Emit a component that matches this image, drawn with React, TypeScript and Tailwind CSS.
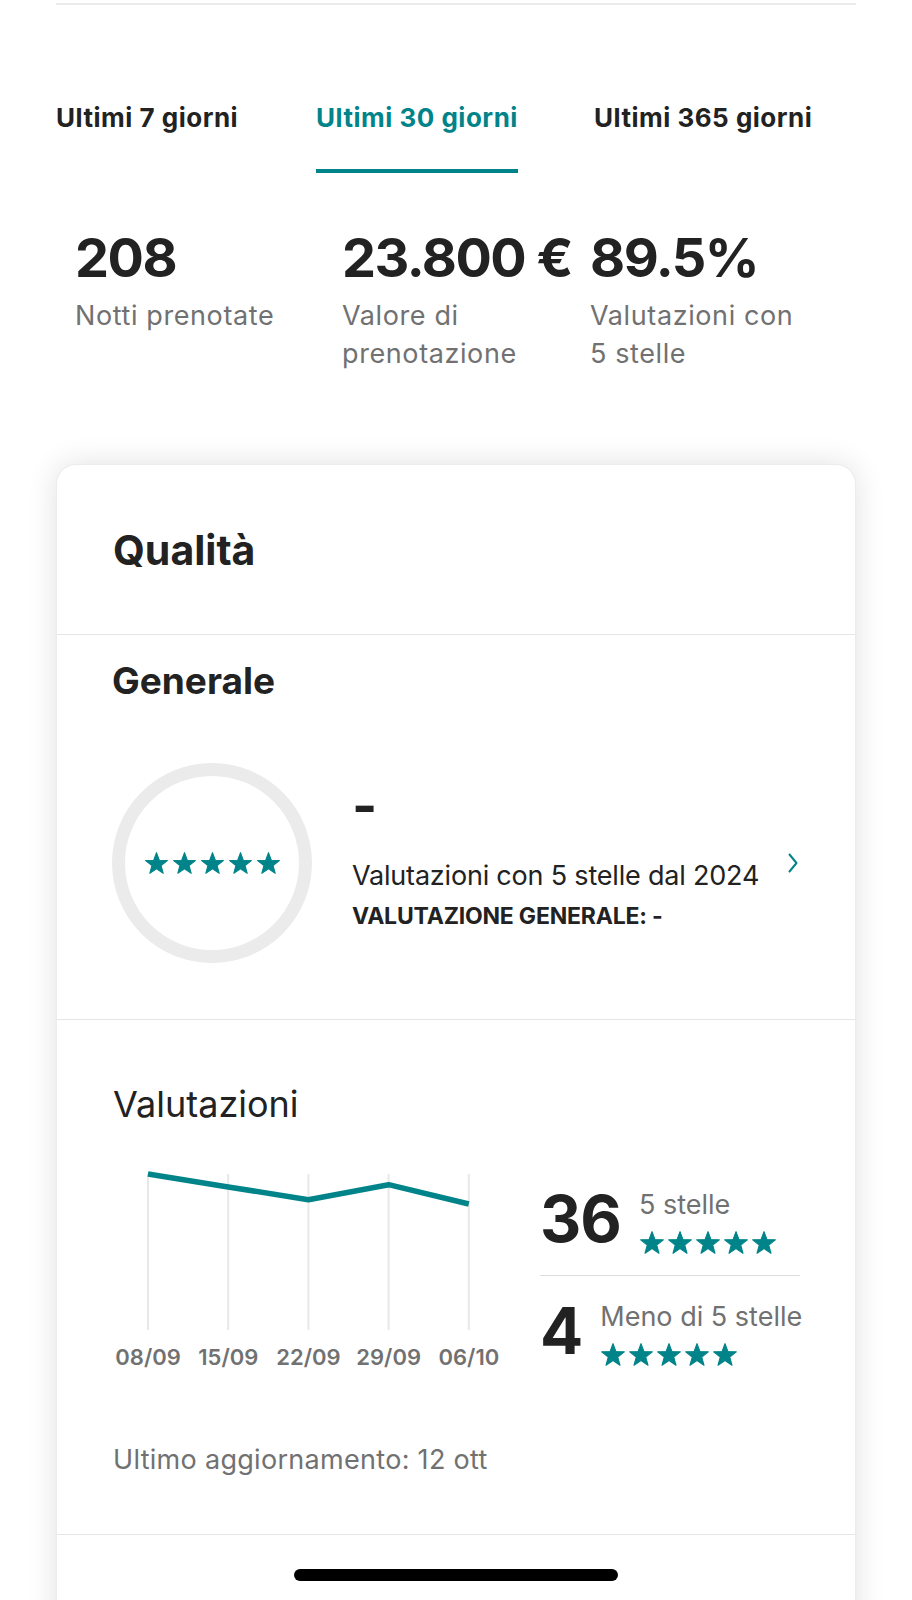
import React from "react";

const TEAL = "#008489";

function Star({ size }: { size: number }) {
  return (
    <svg width={size} height={size} viewBox="0 0 24 24" className="block">
      <path
        d="M12 1.5 L14.7 8.78 L22.46 9.1 L16.37 13.92 L18.47 21.4 L12 17.1 L5.53 21.4 L7.63 13.92 L1.54 9.1 L9.3 8.78 Z"
        fill={TEAL}
        stroke={TEAL}
        strokeWidth={1}
        strokeLinejoin="round"
      />
    </svg>
  );
}

function Stars({ size, gap }: { size: number; gap: string }) {
  return (
    <div className={`flex ${gap}`}>
      {[0, 1, 2, 3, 4].map((i) => (
        <Star key={i} size={size} />
      ))}
    </div>
  );
}

const pts = [6, 19, 31.7, 16.7, 36];
const xs = [40, 120.2, 200.4, 280.6, 360.8];
const dates = ["08/09", "15/09", "22/09", "29/09", "06/10"];

export default function App() {
  return (
    <div
      className="relative w-[912px] h-[1600px] overflow-hidden bg-white text-[#222222]"
      style={{ fontFamily: "Inter, 'Noto Sans', sans-serif" }}
    >
      {/* top rule */}
      <div className="mt-[3px] mx-[56px] h-[2px] bg-[#ebebeb]" />

      {/* tabs */}
      <div className="mt-[98px] flex items-start pl-[56px]">
        <div className="w-[260px] text-[26px] leading-[30px] font-bold tracking-[0.5px]">
          Ultimi 7 giorni
        </div>
        <div className="w-[278px]">
          <div className="inline-flex flex-col">
            <div className="text-[26px] leading-[30px] font-bold tracking-[0.5px] text-[#008489]">
              Ultimi 30 giorni
            </div>
            <div className="mt-[36px] h-[4px] bg-[#008489]" />
          </div>
        </div>
        <div className="text-[26px] leading-[30px] font-bold tracking-[0.5px]">
          Ultimi 365 giorni
        </div>
      </div>

      {/* stats */}
      <div className="mt-[57px] flex items-start pl-[75px]">
        <div className="w-[267px]">
          <div className="text-[54px] leading-[56px] font-bold tracking-[-1.5px]">208</div>
          <div className="mt-[11px] text-[27px] leading-[38px] tracking-[0.6px] text-[#717171]">Notti prenotate</div>
        </div>
        <div className="w-[248px]">
          <div className="text-[54px] leading-[56px] font-bold tracking-[-1.5px] whitespace-nowrap">
            23.800 €
          </div>
          <div className="mt-[11px] text-[27px] leading-[38px] tracking-[0.6px] text-[#717171]">
            Valore di
            <br />
            prenotazione
          </div>
        </div>
        <div>
          <div className="text-[54px] leading-[56px] font-bold tracking-[-1.5px]">89.5%</div>
          <div className="mt-[11px] text-[27px] leading-[38px] tracking-[0.6px] text-[#717171]">
            Valutazioni con
            <br />5 stelle
          </div>
        </div>
      </div>

      {/* card */}
      <div className="mt-[91px] mx-[56px] rounded-t-[20px] border border-[#ececec] bg-white shadow-[0_0_30px_rgba(0,0,0,0.12)]">
        <div className="h-[170px] flex items-center px-[56px] border-b border-[#e6e6e6]">
          <div className="text-[41px] leading-[48px] font-bold">Qualità</div>
        </div>

        {/* Generale */}
        <div className="px-[55px] pt-[25px] pb-[56px] border-b border-[#e6e6e6]">
          <div className="text-[37px] leading-[42px] font-bold">Generale</div>
          <div className="mt-[61px] flex items-start">
            <div className="w-[200px] h-[200px] shrink-0 rounded-full border-[13px] border-[#ebebeb] flex items-center justify-center">
              <Stars size={25} gap="gap-[3px]" />
            </div>
            <div className="ml-[40px] mt-[19px] flex flex-col">
              <div className="text-[54px] leading-[48px] font-bold">-</div>
              <div className="mt-[28px] text-[27px] leading-[36px] tracking-[-0.2px]">
                Valutazioni con 5 stelle dal 2024
              </div>
              <div className="mt-[7px] text-[23px] leading-[30px] font-bold tracking-[-0.2px]">
                VALUTAZIONE GENERALE: -
              </div>
            </div>
            <div className="ml-auto self-center pr-[2px]">
              <svg width="10" height="20" viewBox="0 0 10 20">
                <path d="M1.5 1.5 L8.5 10 L1.5 18.5" fill="none" stroke={TEAL} strokeWidth="2" strokeLinecap="round" strokeLinejoin="round" />
              </svg>
            </div>
          </div>
        </div>

        {/* Valutazioni */}
        <div className="pl-[56px] pr-[55px] pt-[62px] pb-[56px] border-b border-[#e6e6e6]">
          <div className="text-[36px] leading-[44px]">Valutazioni</div>
          <div className="mt-[42px] flex items-start">
            <div className="ml-[-5px] w-[401px] shrink-0">
              <svg width="401" height="162" viewBox="0 0 401 162" className="block">
                {xs.map((x, i) => (
                  <line key={i} x1={x} y1={6} x2={x} y2={162} stroke="#e8e8e8" strokeWidth="2" />
                ))}
                <polyline
                  points={xs.map((x, i) => `${x},${pts[i]}`).join(" ")}
                  fill="none"
                  stroke={TEAL}
                  strokeWidth="5.5"
                  strokeLinejoin="round"
                />
              </svg>
              <div className="mt-[13px] flex">
                {dates.map((d) => (
                  <div key={d} className="w-[80.2px] text-center text-[22px] leading-[28px] font-semibold text-[#717171]">
                    {d}
                  </div>
                ))}
              </div>
            </div>
            <div className="ml-[31px] mt-[19px] w-[260px]">
              <div className="flex items-start gap-[18px]">
                <div className="text-[64px] leading-[64px] font-bold tracking-[-1px]">36</div>
                <div className="mt-[2px] flex flex-col">
                  <div className="text-[27px] leading-[32px] text-[#717171]">5 stelle</div>
                  <div className="mt-[9px]">
                    <Stars size={26} gap="gap-[2px]" />
                  </div>
                </div>
              </div>
              <div className="mt-[19px] h-[1px] bg-[#dddddd]" />
              <div className="mt-[23px] flex items-start gap-[18px]">
                <div className="text-[64px] leading-[64px] font-bold tracking-[-1px]">4</div>
                <div className="mt-[2px] flex flex-col">
                  <div className="text-[27px] leading-[32px] text-[#717171] whitespace-nowrap">Meno di 5 stelle</div>
                  <div className="mt-[9px]">
                    <Stars size={26} gap="gap-[2px]" />
                  </div>
                </div>
              </div>
            </div>
          </div>
          <div className="mt-[71px] text-[27px] leading-[36px] text-[#717171] tracking-[0.3px]">
            Ultimo aggiornamento: 12 ott
          </div>
        </div>

        <div className="h-[300px]" />
      </div>

      {/* home indicator */}
      <div className="absolute bottom-[19px] left-1/2 -translate-x-1/2 w-[324px] h-[12px] rounded-full bg-black" />
    </div>
  );
}
